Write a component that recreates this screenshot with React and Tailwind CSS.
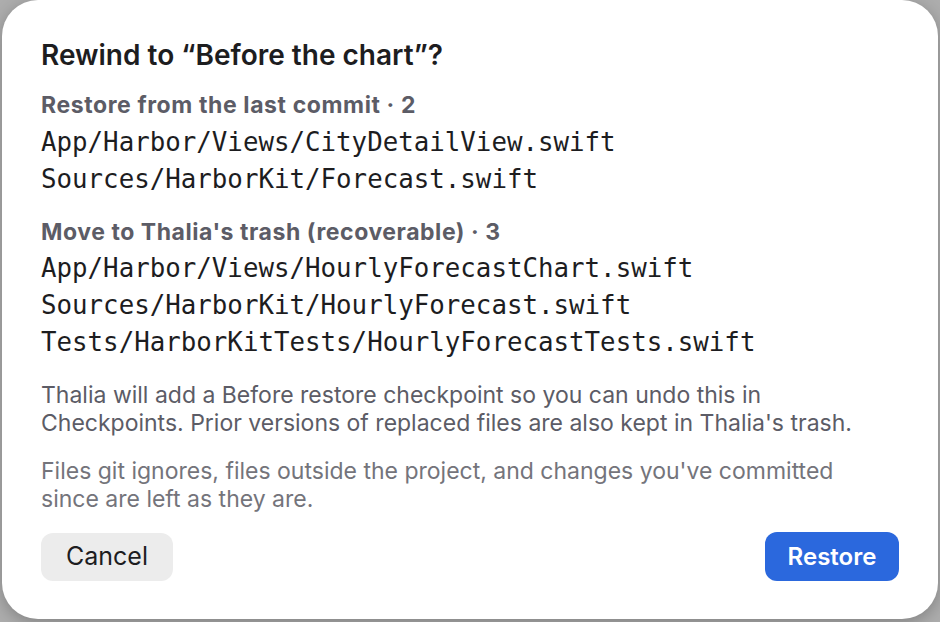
import React from 'react';

const restoreFiles = [
    "App/Harbor/Views/CityDetailView.swift",
    "Sources/HarborKit/Forecast.swift",
];

const trashFiles = [
    "App/Harbor/Views/HourlyForecastChart.swift",
    "Sources/HarborKit/HourlyForecast.swift",
    "Tests/HarborKitTests/HourlyForecastTests.swift",
];

const FileList = ({ files, className }) => (
    <div className={`font-['DejaVu_Sans_Mono',monospace] text-[25.8px] leading-[37px] text-[#1d1d1f] ${className}`}>
        {files.map((f) => (
            <div key={f}>{f}</div>
        ))}
    </div>
);

const App = () => {
    return (
        <div className="h-[622px] w-[940px] bg-[#adadad] px-[2px] pb-[3px] font-['Inter',sans-serif]">
            <div className="flex h-full flex-col rounded-[36px] bg-white px-[39px] pt-[39px] shadow-[0_4px_16px_rgba(0,0,0,0.25)]">
                <h1 className="text-[28px] font-semibold leading-[32px] text-[#1d1d1f]">
                    Rewind to “Before the chart”?
                </h1>

                <div className="mt-[20px] text-[23px] font-bold leading-[28px] tracking-[0.6px] text-[#5c5c66]">
                    Restore from the last commit · 2
                </div>
                <FileList files={restoreFiles} className="mt-[5px]" />

                <div className="mt-[20px] text-[23px] font-bold leading-[28px] tracking-[0.55px] text-[#5c5c66]">
                    Move to Thalia's trash (recoverable) · 3
                </div>
                <FileList files={trashFiles} className="mt-[4px]" />

                <p className="mt-[20px] text-[23px] leading-[28px] text-[#5c5c66]">
                    Thalia will add a Before restore checkpoint so you can undo this in
                    <br />
                    Checkpoints. Prior versions of replaced files are also kept in Thalia's trash.
                </p>
                <p className="mt-[20px] text-[23px] leading-[28px] text-[#74747b]">
                    Files git ignores, files outside the project, and changes you've committed
                    <br />
                    since are left as they are.
                </p>

                <div className="mt-[19px] flex items-center justify-between">
                    <button
                        type="button"
                        className="h-[48px] w-[132px] rounded-[12px] bg-[#ececec] text-[25px] text-[#1d1d1f]"
                    >
                        Cancel
                    </button>
                    <button
                        type="button"
                        className="h-[49px] w-[134px] rounded-[12px] bg-[#2b68dd] text-[24px] font-semibold text-white"
                    >
                        Restore
                    </button>
                </div>
            </div>
        </div>
    );
};

export default App;
